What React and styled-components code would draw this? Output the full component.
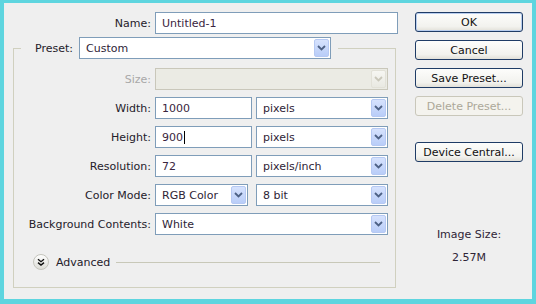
import React from 'react'
import styled, { createGlobalStyle } from 'styled-components'

const GlobalStyle = createGlobalStyle`
  html, body {
    margin: 0;
    padding: 0;
  }
  body {
    font-family: "DejaVu Sans", "Liberation Sans", sans-serif;
    font-size: 11px;
    color: #24202a;
  }
  * {
    box-sizing: border-box;
  }
`

function Chevron({ disabled }) {
    return (
        <svg width="9" height="6" viewBox="0 0 9 6">
            <path
                d="M1 1 L4.5 4.5 L8 1"
                fill="none"
                stroke={disabled ? '#c9c7ba' : '#4d6185'}
                strokeWidth="1.8"
            />
        </svg>
    )
}

function AdvancedIcon() {
    return (
        <svg width="16" height="16" viewBox="0 0 16 16">
            <defs>
                <linearGradient id="adv" x1="0" y1="0" x2="0" y2="1">
                    <stop offset="0" stopColor="#ffffff" />
                    <stop offset="1" stopColor="#dcdcd6" />
                </linearGradient>
            </defs>
            <circle cx="8" cy="8" r="7.5" fill="url(#adv)" stroke="#c4c4bc" />
            <path d="M5 5.2 L8 7.7 L11 5.2 M5 8.6 L8 11.1 L11 8.6" fill="none" stroke="#111" strokeWidth="1.4" />
        </svg>
    )
}

function Select({ value, width, disabled }) {
    return (
        <SelectBox width={width} disabled={disabled}>
            <span>{value}</span>
            <ArrowBox disabled={disabled}>
                <Chevron disabled={disabled} />
            </ArrowBox>
        </SelectBox>
    )
}

function App() {
    return (
        <>
            <GlobalStyle />
            <Dialog>
                <Left>
                    <NameRow>
                        <Label>Name:</Label>
                        <TextBox width={243}>Untitled-1</TextBox>
                    </NameRow>

                    <Group>
                        <Legend>
                            <span>Preset:</span>
                            <Select value="Custom" width={252} />
                        </Legend>

                        <Grid>
                            <Label disabled>Size:</Label>
                            <Select value="" width={233} disabled />

                            <Label>Width:</Label>
                            <Pair>
                                <TextBox width={97}>1000</TextBox>
                                <Select value="pixels" width={132} />
                            </Pair>

                            <Label>Height:</Label>
                            <Pair>
                                <TextBox width={97}>
                                    900<Caret />
                                </TextBox>
                                <Select value="pixels" width={132} />
                            </Pair>

                            <Label>Resolution:</Label>
                            <Pair>
                                <TextBox width={97}>72</TextBox>
                                <Select value="pixels/inch" width={132} />
                            </Pair>

                            <Label>Color Mode:</Label>
                            <Pair>
                                <Select value="RGB Color" width={93} />
                                <Select value="8 bit" width={132} />
                            </Pair>

                            <Label>Background Contents:</Label>
                            <Select value="White" width={233} />
                        </Grid>

                        <Advanced>
                            <AdvancedIcon />
                            <span>Advanced</span>
                            <Rule />
                        </Advanced>
                    </Group>
                </Left>

                <Right>
                    <Button primary>OK</Button>
                    <Button>Cancel</Button>
                    <Button>Save Preset...</Button>
                    <Button disabled>Delete Preset...</Button>
                    <Button space={26}>Device Central...</Button>
                    <Info>Image Size:</Info>
                    <Info space={9}>2.57M</Info>
                </Right>
            </Dialog>
        </>
    )
}

const Dialog = styled.div`
    width: 536px;
    height: 304px;
    display: flex;
    padding: 9px 0 0 9px;
    background: #efefef;
    border-style: solid;
    border-color: #5ed5df;
    border-width: 3px 4px 5px 4px;
`

const Left = styled.div`
    width: 385px;
    display: flex;
    flex-direction: column;
`

const NameRow = styled.div`
    display: flex;
    align-items: center;
    gap: 4px;

    & > span {
        width: 138px;
    }
`

const Label = styled.span`
    text-align: right;
    white-space: nowrap;
    color: ${(p) => (p.disabled ? '#a8a8a8' : '#24202a')};
`

const TextBox = styled.div`
    width: ${(p) => p.width}px;
    height: 22px;
    display: flex;
    align-items: center;
    padding: 0 6px;
    background: #fff;
    border: 1px solid #7f9db9;
    color: #3a2540;
`

const Caret = styled.i`
    display: inline-block;
    width: 1px;
    height: 13px;
    margin-left: 1px;
    background: #000;
`

const SelectBox = styled.div`
    width: ${(p) => p.width}px;
    height: 22px;
    display: flex;
    align-items: center;
    justify-content: space-between;
    padding: 1px 1px 1px 6px;
    background: ${(p) => (p.disabled ? '#ebebe4' : '#fff')};
    border: 1px solid ${(p) => (p.disabled ? '#c9c7ba' : '#7f9db9')};
    color: #2e2436;
    white-space: nowrap;
`

const ArrowBox = styled.div`
    width: 15px;
    height: 18px;
    display: flex;
    align-items: center;
    justify-content: center;
    border-radius: 2px;
    border: 1px solid ${(p) => (p.disabled ? '#e2e1d8' : '#b6c9f3')};
    background: ${(p) =>
        p.disabled
            ? 'linear-gradient(#f6f6f2, #e9e9e2)'
            : 'linear-gradient(#d6e2fd, #b9cdf8)'};
`

const Group = styled.fieldset`
    width: 383px;
    margin: 3px 0 0 0;
    padding: 9px 7px 17px 0;
    border: 1px solid #d0d0bf;
`

const Legend = styled.legend`
    display: flex;
    align-items: center;
    gap: 6px;
    margin-left: 7px;
    padding: 0 7px 0 14px;
`

const Grid = styled.div`
    display: grid;
    grid-template-columns: 137px 233px;
    column-gap: 4px;
    row-gap: 7px;
    align-items: center;
`

const Pair = styled.div`
    display: flex;
    justify-content: space-between;
`

const Advanced = styled.div`
    height: 16px;
    margin-top: 19px;
    padding-left: 19px;
    display: flex;
    align-items: center;
    gap: 7px;
`

const Rule = styled.div`
    flex: 1;
    height: 1px;
    margin: 0 8px 0 -1px;
    background: #c8c8b8;
`

const Right = styled.div`
    width: 108px;
    margin-left: 17px;
    display: flex;
    flex-direction: column;
`

const Button = styled.button`
    height: 20px;
    margin: ${(p) => (p.space !== undefined ? p.space : 8)}px 0 0 0;
    &:first-child {
        margin-top: 0;
    }
    padding: 0;
    font-family: inherit;
    font-size: 11px;
    border-radius: 3px;
    border: 1px solid ${(p) => (p.disabled ? '#c9c7ba' : '#1f3c66')};
    color: ${(p) => (p.disabled ? '#aca899' : '#111')};
    background: ${(p) =>
        p.disabled ? '#f4f3ee' : 'linear-gradient(#fdfdfb, #f2f2ee 75%, #e2e0d8)'};
    box-shadow: ${(p) => (p.primary ? 'inset 0 0 0 1px #b8cdee' : 'none')};
`

const Info = styled.div`
    margin-top: ${(p) => (p.space !== undefined ? p.space : 66)}px;
    text-align: center;
    line-height: 14px;
    color: #2e2436;
`

export default App
